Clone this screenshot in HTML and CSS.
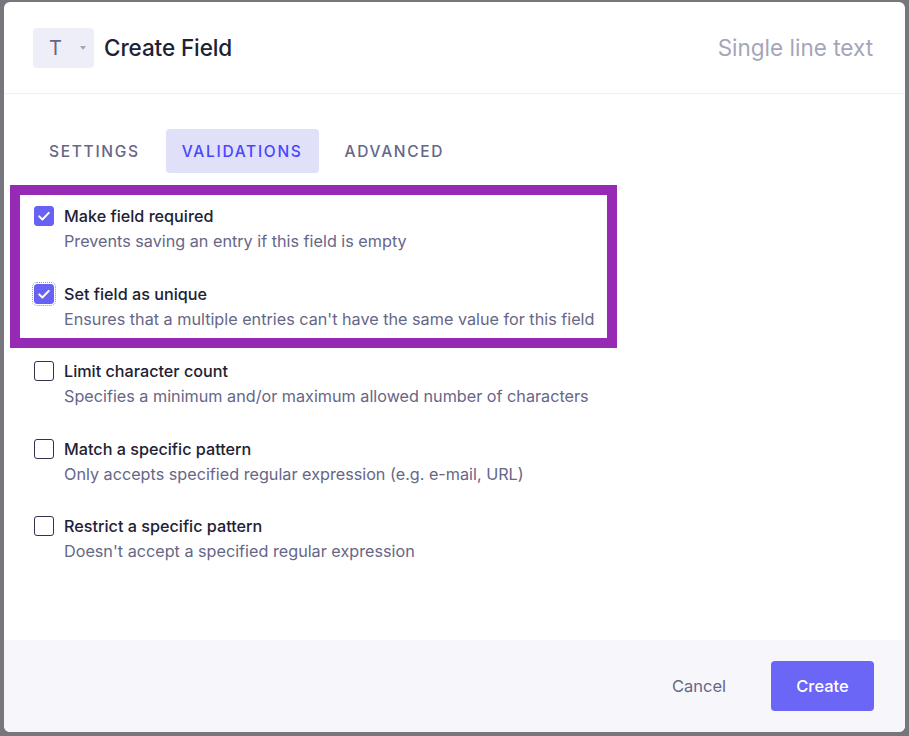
FILE: index.html
```html
<!DOCTYPE html>
<html lang="en">
<head>
<meta charset="utf-8">
<title>Create Field</title>
<link rel="stylesheet" href="styles.css">
</head>
<body>
<div class="dialog">
  <header class="head">
    <div class="type-select">
      <span class="type-letter">T</span>
      <span class="caret"></span>
    </div>
    <h1 class="title">Create Field</h1>
    <span class="subtitle">Single line text</span>
  </header>

  <main class="body">
    <nav class="tabs">
      <span class="tab">SETTINGS</span>
      <span class="tab tab-active">VALIDATIONS</span>
      <span class="tab">ADVANCED</span>
    </nav>

    <ul class="options">
      <li class="option">
        <span class="box checked"><svg viewBox="0 0 20 20" width="20" height="20"><path d="M5.2 10.4l3.2 3.1 6.4-6.6" fill="none" stroke="#fff" stroke-width="2" stroke-linecap="round" stroke-linejoin="round"/></svg></span>
        <div class="text">
          <div class="label">Make field required</div>
          <div class="desc">Prevents saving an entry if this field is empty</div>
        </div>
      </li>
      <li class="option">
        <span class="box checked focused"><svg viewBox="0 0 20 20" width="20" height="20"><path d="M5.2 10.4l3.2 3.1 6.4-6.6" fill="none" stroke="#fff" stroke-width="2" stroke-linecap="round" stroke-linejoin="round"/></svg></span>
        <div class="text">
          <div class="label">Set field as unique</div>
          <div class="desc">Ensures that a multiple entries can't have the same value for this field</div>
        </div>
      </li>
      <li class="option">
        <span class="box"></span>
        <div class="text">
          <div class="label">Limit character count</div>
          <div class="desc">Specifies a minimum and/or maximum allowed number of characters</div>
        </div>
      </li>
      <li class="option">
        <span class="box"></span>
        <div class="text">
          <div class="label">Match a specific pattern</div>
          <div class="desc">Only accepts specified regular expression (e.g. e-mail, URL)</div>
        </div>
      </li>
      <li class="option">
        <span class="box"></span>
        <div class="text">
          <div class="label">Restrict a specific pattern</div>
          <div class="desc">Doesn't accept a specified regular expression</div>
        </div>
      </li>
    </ul>
  </main>

  <footer class="foot">
    <button class="btn-cancel" type="button">Cancel</button>
    <button class="btn-create" type="button">Create</button>
  </footer>

  <div class="highlight"></div>
</div>
</body>
</html>
```

FILE: styles.css
```css
* { box-sizing: border-box; }

html, body {
  margin: 0;
  padding: 0;
  height: 100%;
}

body {
  background: #77767c;
  font-family: Inter, "Noto Sans", sans-serif;
  overflow: hidden;
}

.dialog {
  position: relative;
  margin: 2px 4px 0 4px;
  height: 730px;
  background: #ffffff;
  border-radius: 6px;
  display: flex;
  flex-direction: column;
  overflow: hidden;
}

.head {
  height: 92px;
  flex: none;
  display: flex;
  align-items: center;
  padding: 0 32px 0 29px;
  border-bottom: 1px solid #f0f0f5;
}

.type-select {
  width: 61px;
  height: 40px;
  background: #eeeef9;
  border-radius: 4px;
  display: flex;
  align-items: center;
  padding-left: 16px;
}

.type-letter {
  font-size: 20px;
  color: #666687;
  font-weight: 400;
}

.caret {
  margin-left: 18px;
  width: 0;
  height: 0;
  border-left: 3.5px solid transparent;
  border-right: 3.5px solid transparent;
  border-top: 4px solid #a5a5ba;
}

.title {
  margin: 0 0 0 10px;
  font-size: 22.5px;
  font-weight: 500;
  color: #212134;
  letter-spacing: -0.1px;
}

.subtitle {
  margin-left: auto;
  font-size: 22.5px;
  font-weight: 400;
  color: #a5a5ba;
}

.body {
  flex: 1;
  padding: 35px 29px 0 29px;
}

.tabs {
  display: flex;
  gap: 10px;
}

.tab {
  height: 44px;
  display: flex;
  align-items: center;
  padding: 0 16px;
  border-radius: 4px;
  font-size: 15.5px;
  font-weight: 500;
  letter-spacing: 1.7px;
  color: #666687;
}

.tab-active {
  background: #e0e0f8;
  color: #4945ff;
}

.options {
  list-style: none;
  margin: 32px 0 0 0;
  padding: 0 0 0 1px;
  display: flex;
  flex-direction: column;
  gap: 30.5px;
}

.option {
  display: flex;
  align-items: flex-start;
  gap: 10px;
}

.box {
  flex: none;
  width: 20px;
  height: 20px;
  margin-top: 1px;
  border: 1px solid #32324d;
  border-radius: 3px;
  display: flex;
  align-items: center;
  justify-content: center;
}

.box.checked {
  background: #6761f4;
  border-color: #6761f4;
}

.box.checked svg { display: block; margin: -1px; }

.box.focused {
  outline: 1px dotted #8e8af6;
  outline-offset: 1px;
}

.text {
  display: flex;
  flex-direction: column;
  gap: 3px;
}

.label {
  font-size: 16.2px;
  font-weight: 500;
  line-height: 22px;
  color: #212134;
}

.desc {
  font-size: 16.2px;
  line-height: 22px;
  color: #666687;
}

.foot {
  flex: none;
  height: 92px;
  background: #f7f7fb;
  display: flex;
  align-items: center;
  justify-content: flex-end;
  padding: 0 31px 0 0;
  gap: 29px;
}

.btn-cancel {
  background: none;
  border: none;
  font-family: inherit;
  font-size: 16.5px;
  color: #666687;
  padding: 0 16px;
  height: 50px;
}

.btn-create {
  width: 103px;
  height: 50px;
  background: #6b66f6;
  color: #ffffff;
  border: none;
  border-radius: 4px;
  font-family: inherit;
  font-size: 16.5px;
  font-weight: 500;
}

.highlight {
  position: absolute;
  left: 6px;
  top: 183px;
  width: 607px;
  height: 163px;
  border: 10px solid #962ab4;
  pointer-events: none;
}
```
